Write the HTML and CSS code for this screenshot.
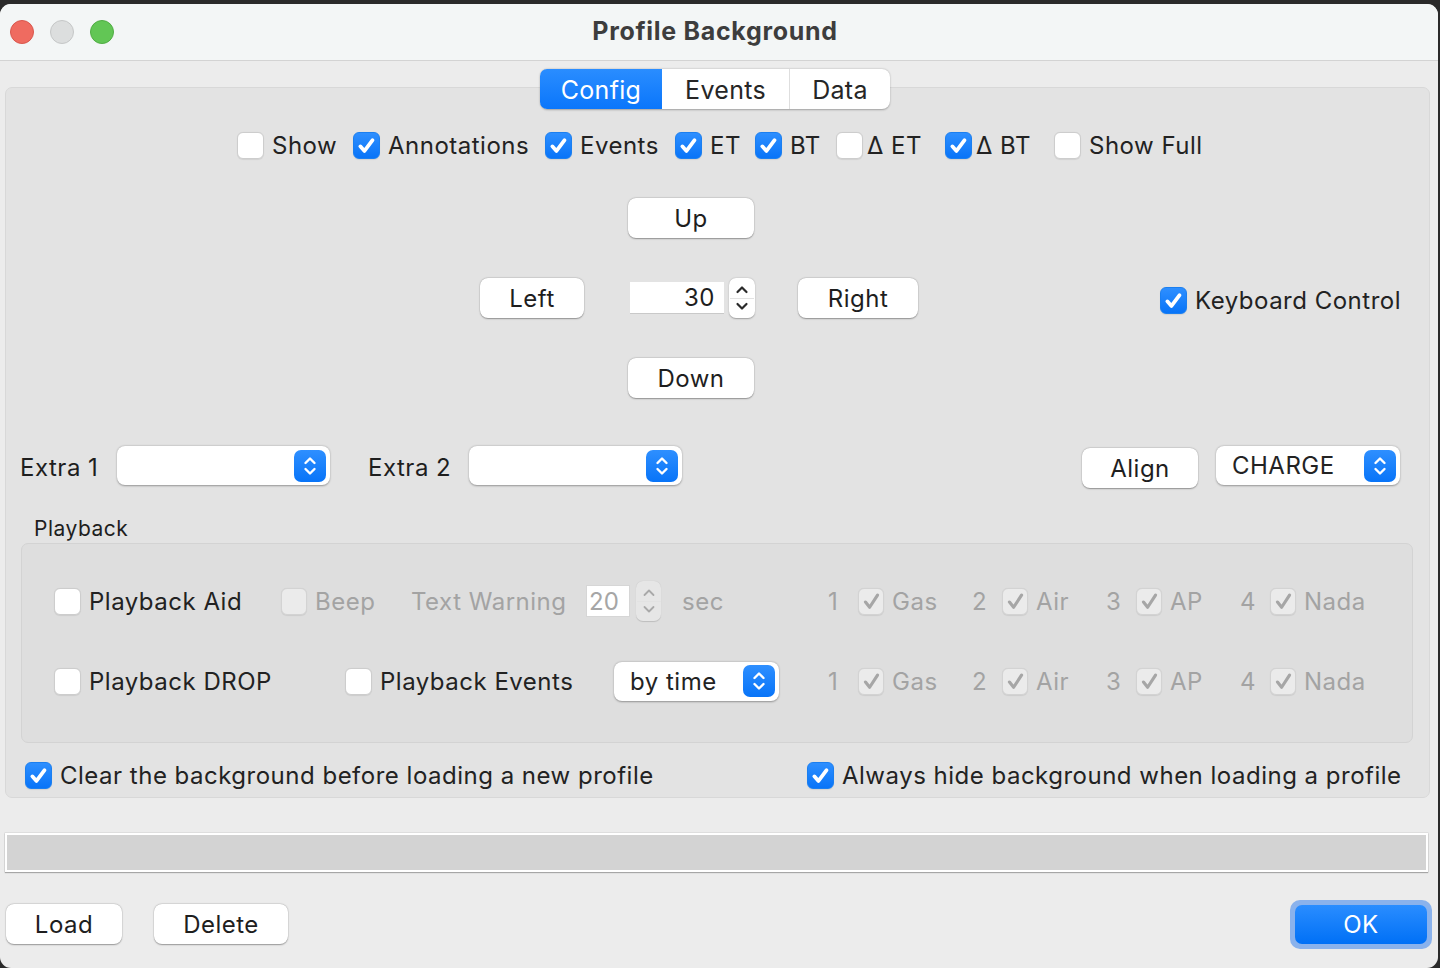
FILE: index.html
```html
<!DOCTYPE html>
<html>
<head>
<meta charset="utf-8">
<link rel="stylesheet" href="styles.css">
</head>
<body>
<div class="window">
  <div class="titlebar">
    <div class="lights">
      <span class="light red"></span>
      <span class="light grey"></span>
      <span class="light green"></span>
    </div>
    <div class="title">Profile Background</div>
  </div>

  <div class="tabs-wrap">
    <div class="tabs">
      <span class="tab sel t-config">Config</span>
      <span class="tab t-events">Events</span>
      <span class="tab t-data">Data</span>
    </div>
  </div>

  <div class="panel">
    <div class="row row1">
      <label class="ck w-show"><span class="cb"></span><span>Show</span></label>
      <label class="ck w-ann"><span class="cb on"><svg viewBox="0 0 16 16"><path d="M3.7 8.6L6.6 11.8L12.2 4.3"/></svg></span><span>Annotations</span></label>
      <label class="ck w-ev"><span class="cb on"><svg viewBox="0 0 16 16"><path d="M3.7 8.6L6.6 11.8L12.2 4.3"/></svg></span><span>Events</span></label>
      <label class="ck w-et"><span class="cb on"><svg viewBox="0 0 16 16"><path d="M3.7 8.6L6.6 11.8L12.2 4.3"/></svg></span><span>ET</span></label>
      <label class="ck w-bt"><span class="cb on"><svg viewBox="0 0 16 16"><path d="M3.7 8.6L6.6 11.8L12.2 4.3"/></svg></span><span>BT</span></label>
      <label class="ck tight w-det"><span class="cb"></span><span>Δ ET</span></label>
      <label class="ck tight w-dbt"><span class="cb on"><svg viewBox="0 0 16 16"><path d="M3.7 8.6L6.6 11.8L12.2 4.3"/></svg></span><span>Δ BT</span></label>
      <label class="ck"><span class="cb"></span><span>Show Full</span></label>
    </div>

    <div class="row row2">
      <span class="btn b-up">Up</span>
    </div>

    <div class="row row3">
      <span class="btn b-left">Left</span>
      <div class="spin">
        <span class="spin-input">30</span>
        <span class="stepper">
          <svg viewBox="0 0 26 40"><path class="chev" d="M8.5 14L13 9.5L17.5 14"/><line x1="1" y1="20.5" x2="25" y2="20.5" class="sep"/><path class="chev" d="M8.5 26L13 30.5L17.5 26"/></svg>
        </span>
      </div>
      <span class="btn b-right">Right</span>
      <label class="ck kb"><span class="cb on"><svg viewBox="0 0 16 16"><path d="M3.7 8.6L6.6 11.8L12.2 4.3"/></svg></span><span>Keyboard Control</span></label>
    </div>

    <div class="row row4">
      <span class="btn b-up">Down</span>
    </div>

    <div class="row row5">
      <span class="lbl l-ex1">Extra 1</span>
      <span class="combo c-ex"><span class="combo-text"></span><span class="arrows"><svg viewBox="0 0 32 32"><path d="M11.5 13L16 8.5L20.5 13M11.5 19L16 23.5L20.5 19"/></svg></span></span>
      <span class="lbl l-ex2">Extra 2</span>
      <span class="combo c-ex"><span class="combo-text"></span><span class="arrows"><svg viewBox="0 0 32 32"><path d="M11.5 13L16 8.5L20.5 13M11.5 19L16 23.5L20.5 19"/></svg></span></span>
      <span class="btn b-align">Align</span>
      <span class="combo c-charge"><span class="combo-text">CHARGE</span><span class="arrows"><svg viewBox="0 0 32 32"><path d="M11.5 13L16 8.5L20.5 13M11.5 19L16 23.5L20.5 19"/></svg></span></span>
    </div>

    <div class="group-title">Playback</div>
    <div class="group">
      <div class="grow growA">
        <div class="left-block">
          <label class="ck w-paid"><span class="cb"></span><span>Playback Aid</span></label>
          <label class="ck dis w-beep"><span class="cb dcb"></span><span>Beep</span></label>
          <span class="dis-text w-tw">Text Warning</span>
          <div class="spin small w-sp">
            <span class="spin-input dis-in">20</span>
            <span class="stepper dstep">
              <svg viewBox="0 0 26 40"><path class="chev" d="M8.5 14L13 9.5L17.5 14"/><line x1="1" y1="20.5" x2="25" y2="20.5" class="sep"/><path class="chev" d="M8.5 26L13 30.5L17.5 26"/></svg>
            </span>
          </div>
          <span class="dis-text">sec</span>
        </div>
        <div class="chans">
          <div class="chan ch1"><span class="num">1</span><span class="cb dcb"><svg viewBox="0 0 16 16"><path d="M3.8 8.4L6.7 12L12.2 3.6"/></svg></span><span>Gas</span></div>
          <div class="chan ch2"><span class="num">2</span><span class="cb dcb"><svg viewBox="0 0 16 16"><path d="M3.8 8.4L6.7 12L12.2 3.6"/></svg></span><span>Air</span></div>
          <div class="chan ch3"><span class="num">3</span><span class="cb dcb"><svg viewBox="0 0 16 16"><path d="M3.8 8.4L6.7 12L12.2 3.6"/></svg></span><span>AP</span></div>
          <div class="chan"><span class="num">4</span><span class="cb dcb"><svg viewBox="0 0 16 16"><path d="M3.8 8.4L6.7 12L12.2 3.6"/></svg></span><span>Nada</span></div>
        </div>
      </div>
      <div class="grow growB">
        <div class="left-block">
          <label class="ck w-pdrop"><span class="cb"></span><span>Playback DROP</span></label>
          <label class="ck w-pev"><span class="cb"></span><span>Playback Events</span></label>
          <span class="combo c-time"><span class="combo-text">by time</span><span class="arrows"><svg viewBox="0 0 32 32"><path d="M11.5 13L16 8.5L20.5 13M11.5 19L16 23.5L20.5 19"/></svg></span></span>
        </div>
        <div class="chans">
          <div class="chan ch1"><span class="num">1</span><span class="cb dcb"><svg viewBox="0 0 16 16"><path d="M3.8 8.4L6.7 12L12.2 3.6"/></svg></span><span>Gas</span></div>
          <div class="chan ch2"><span class="num">2</span><span class="cb dcb"><svg viewBox="0 0 16 16"><path d="M3.8 8.4L6.7 12L12.2 3.6"/></svg></span><span>Air</span></div>
          <div class="chan ch3"><span class="num">3</span><span class="cb dcb"><svg viewBox="0 0 16 16"><path d="M3.8 8.4L6.7 12L12.2 3.6"/></svg></span><span>AP</span></div>
          <div class="chan"><span class="num">4</span><span class="cb dcb"><svg viewBox="0 0 16 16"><path d="M3.8 8.4L6.7 12L12.2 3.6"/></svg></span><span>Nada</span></div>
        </div>
      </div>
    </div>

    <div class="row rowlast">
      <label class="ck w-clear"><span class="cb on"><svg viewBox="0 0 16 16"><path d="M3.7 8.6L6.6 11.8L12.2 4.3"/></svg></span><span>Clear the background before loading a new profile</span></label>
      <label class="ck"><span class="cb on"><svg viewBox="0 0 16 16"><path d="M3.7 8.6L6.6 11.8L12.2 4.3"/></svg></span><span>Always hide background when loading a profile</span></label>
    </div>
  </div>

  <div class="progress"><div class="progress-inner"></div></div>

  <div class="footer">
    <span class="btn b-load">Load</span>
    <span class="btn b-delete">Delete</span>
    <span class="ok-ring"><span class="ok">OK</span></span>
  </div>
</div>
</body>
</html>
```

FILE: styles.css
```css
* { box-sizing: border-box; }
html, body { margin: 0; padding: 0; }
body {
  width: 1440px;
  height: 968px;
  overflow: hidden;
  background: #2a2a2a;
  font-family: Inter, "Noto Sans", "DejaVu Sans", sans-serif;
  font-size: 24px;
  letter-spacing: 0.5px;
  color: #222;
}
.window {
  margin-top: 4px;
  height: 964px;
  width: 1438px;
  background: #ececec;
  border-radius: 11px;
  overflow: hidden;
}
.titlebar {
  height: 57px;
  background: #f3f6f6;
  border-bottom: 1px solid #d3d3d3;
  display: flex;
  align-items: center;
  position: relative;
}
.lights {
  display: flex;
  gap: 16px;
  padding-left: 10px;
}
.light {
  width: 24px; height: 24px;
  border-radius: 50%;
  display: block;
}
.red { background: #ef6b60; border: 1px solid #d9574d; }
.grey { background: #dcdede; border: 1px solid #c5c7c7; }
.green { background: #62c655; border: 1px solid #50ad44; }
.title {
  position: absolute;
  left: 0; right: 0; top: 0; bottom: 0;
  display: flex; align-items: center; justify-content: center;
  font-weight: 700;
  font-size: 25px;
  letter-spacing: 0.7px;
  color: #3d3d3d;
  pointer-events: none;
  padding-right: 8px;
  padding-bottom: 2px;
}

.tabs-wrap {
  display: flex;
  padding-left: 540px;
  margin-top: 8px;
  margin-bottom: -22px;
  position: relative;
  z-index: 2;
}
.tabs {
  display: flex;
  height: 40px;
  background: #fff;
  border-radius: 8px;
  box-shadow: 0 0.5px 2px rgba(0,0,0,0.3);
}
.tab {
  display: flex; align-items: center; justify-content: center;
  font-size: 25px;
  letter-spacing: 0.3px;
  color: #262626;
  padding-top: 2px;
}
.t-config { width: 122px; }
.t-events { width: 128px; border-right: 1px solid #dedede; }
.t-data { width: 100px; }
.tab.sel {
  background: linear-gradient(#2a8dff, #0a76fb);
  color: #fff;
  border-radius: 7px 0 0 7px;
}

.panel {
  margin-left: 5px;
  width: 1425px;
  height: 711px;
  background: #e3e3e3;
  border: 1px solid #d8d8d8;
  border-radius: 7px;
  display: flex;
  flex-direction: column;
}
.row {
  display: flex;
  align-items: center;
  height: 40px;
}
.row1 { margin-top: 37px; padding-left: 231px; }
.row2 { margin-top: 33px; padding-left: 622px; }
.row3 { margin-top: 40px; padding-left: 474px; }
.row4 { margin-top: 40px; padding-left: 622px; }
.row5 { margin-top: 48px; height: 42px; padding-left: 14px; align-items: flex-start; }
.rowlast { margin-top: 12px; padding-left: 19px; }

.ck {
  display: flex;
  align-items: center;
  gap: 8px;
  flex: none;
  white-space: nowrap;
}
.ck.tight { gap: 4px; }
.w-show { width: 116px; }
.w-ann { width: 192px; }
.w-ev { width: 130px; }
.w-et { width: 80px; }
.w-bt { width: 81px; }
.w-det { width: 109px; }
.w-dbt { width: 109px; }

.cb {
  width: 27px; height: 27px;
  border-radius: 6px;
  background: #fff;
  border: 1px solid #cdcdcd;
  box-shadow: 0 0.5px 1px rgba(0,0,0,0.08);
  display: flex; align-items: center; justify-content: center;
  flex: none;
}
.cb svg { width: 23px; height: 23px; }
.cb svg path {
  fill: none;
  stroke: #fff;
  stroke-width: 2.6;
  stroke-linecap: round;
  stroke-linejoin: round;
}
.cb.on {
  background: linear-gradient(#2e8fff, #0874f8);
  border: 1px solid #1b7ff0;
}
.cb.dcb {
  background: #ebebeb;
  border: 1px solid #d3d3d3;
  width: 26px; height: 27px;
}
.cb.dcb svg path { stroke: #a6a6a6; stroke-width: 2.2; }

.btn {
  display: flex; align-items: center; justify-content: center;
  height: 40px;
  background: #fff;
  border-radius: 8px;
  box-shadow: 0 0.5px 1.5px rgba(0,0,0,0.35), 0 0 0 0.5px rgba(0,0,0,0.06);
  color: #1e1e1e;
  font-size: 24px;
  flex: none;
}
.b-up { width: 126px; }
.b-left { width: 104px; }
.b-right { width: 120px; margin-left: 43px; }
.b-align { width: 116px; margin-left: 400px; margin-top: 2px; }

.spin {
  display: flex; align-items: center;
  margin-left: 46px;
  flex: none;
}
.spin-input {
  width: 94px; height: 32px;
  background: #fff;
  border-bottom: 1px solid #c9c9c9;
  display: flex; align-items: center; justify-content: flex-end;
  padding-right: 9px;
  font-size: 24px;
  color: #1e1e1e;
}
.stepper {
  width: 26px; height: 40px;
  margin-left: 5px;
  background: #fff;
  border-radius: 7px;
  box-shadow: 0 0.5px 1.5px rgba(0,0,0,0.3);
  display: block;
}
.stepper svg { width: 26px; height: 40px; display: block; }
.stepper .chev { fill: none; stroke: #2a2a2a; stroke-width: 2.2; stroke-linecap: round; stroke-linejoin: round; }
.stepper .sep { stroke: #e2e2e2; stroke-width: 1; }
.kb { margin-left: 242px; margin-top: 5px; }

.lbl { flex: none; font-size: 24px; color: #1e1e1e; height: 42px; display: flex; align-items: center; }
.l-ex1 { width: 97px; }
.l-ex2 { width: 101px; margin-left: 38px; }
.combo {
  display: flex; align-items: center;
  height: 39px;
  background: #fff;
  border-radius: 8px;
  box-shadow: 0 0.5px 2px rgba(0,0,0,0.35);
  flex: none;
  padding-right: 4px;
}
.combo-text { flex: 1; padding-left: 16px; font-size: 24px; color: #232323; }
.arrows {
  width: 32px; height: 32px;
  border-radius: 7px;
  background: linear-gradient(#2e8fff, #0874f8);
  display: block;
}
.arrows svg { width: 32px; height: 32px; display: block; }
.arrows svg path { fill: none; stroke: #fff; stroke-width: 2.4; stroke-linecap: round; stroke-linejoin: round; }
.c-ex { width: 213px; }
.c-charge { width: 184px; margin-left: 18px; }
.c-time { width: 165px; }

.group-title {
  margin-top: 29px;
  height: 24px;
  padding-left: 28px;
  font-size: 21px;
  line-height: 24px;
  color: #1e1e1e;
}
.group {
  margin-top: 2px;
  margin-left: 15px;
  width: 1392px;
  height: 200px;
  background: #dedede;
  border: 1px solid #d3d3d3;
  border-radius: 7px;
}
.grow {
  display: flex; align-items: center;
  height: 40px;
  padding-left: 32px;
}
.growA { margin-top: 37px; }
.growB { margin-top: 40px; }
.left-block { width: 774px; display: flex; align-items: center; flex: none; height: 40px; }
.w-paid { width: 227px; }
.w-beep { width: 130px; }
.dis { color: #a3a3a3; }
.dis-text { color: #a3a3a3; flex: none; }
.w-tw { width: 175px; }
.spin.small { margin-left: 0; }
.w-sp { width: 96px; }
.dis-in {
  width: 44px; height: 32px;
  border: 1px solid #d6d6d6;
  justify-content: flex-start;
  padding-left: 2px;
  padding-right: 0;
  color: #a6a6a6;
  letter-spacing: 0;
}
.dstep { background: #e6e6e6; margin-left: 6px; width: 25px; box-shadow: 0 0.5px 1px rgba(0,0,0,0.15); }
.dstep .chev { stroke: #a9a9a9; stroke-width: 1.8; }
.w-pdrop { width: 291px; }
.w-pev { width: 269px; }

.chans { display: flex; align-items: center; color: #a3a3a3; }
.chan { display: flex; align-items: center; flex: none; }
.chan .num { width: 30px; }
.chan .cb { margin-right: 8px; }
.ch1 { width: 144px; }
.ch2 { width: 134px; }
.ch3 { width: 134px; }

.w-clear { width: 782px; }

.progress {
  margin-top: 35px;
  margin-left: 5px;
  width: 1423px;
  height: 39px;
  background: #fff;
  padding: 2px;
  box-shadow: 0 1px 1px rgba(0,0,0,0.25), 0 0 0 0.5px #d0d0d0;
}
.progress-inner { height: 100%; background: #d3d3d3; }

.footer {
  display: flex; align-items: center;
  margin-top: 27px;
  height: 50px;
  padding-left: 6px;
}
.b-load { width: 116px; }
.b-delete { width: 134px; margin-left: 32px; }
.ok-ring {
  margin-left: auto;
  margin-right: 6px;
  width: 142px; height: 49px;
  border-radius: 10px;
  background: rgba(40,120,235,0.5);
  padding: 5px;
  display: block;
}
.ok {
  display: flex; align-items: center; justify-content: center;
  height: 39px;
  border-radius: 7px;
  background: linear-gradient(#2a8dff, #0070f6);
  color: #fff;
  font-size: 24px;
}
```
